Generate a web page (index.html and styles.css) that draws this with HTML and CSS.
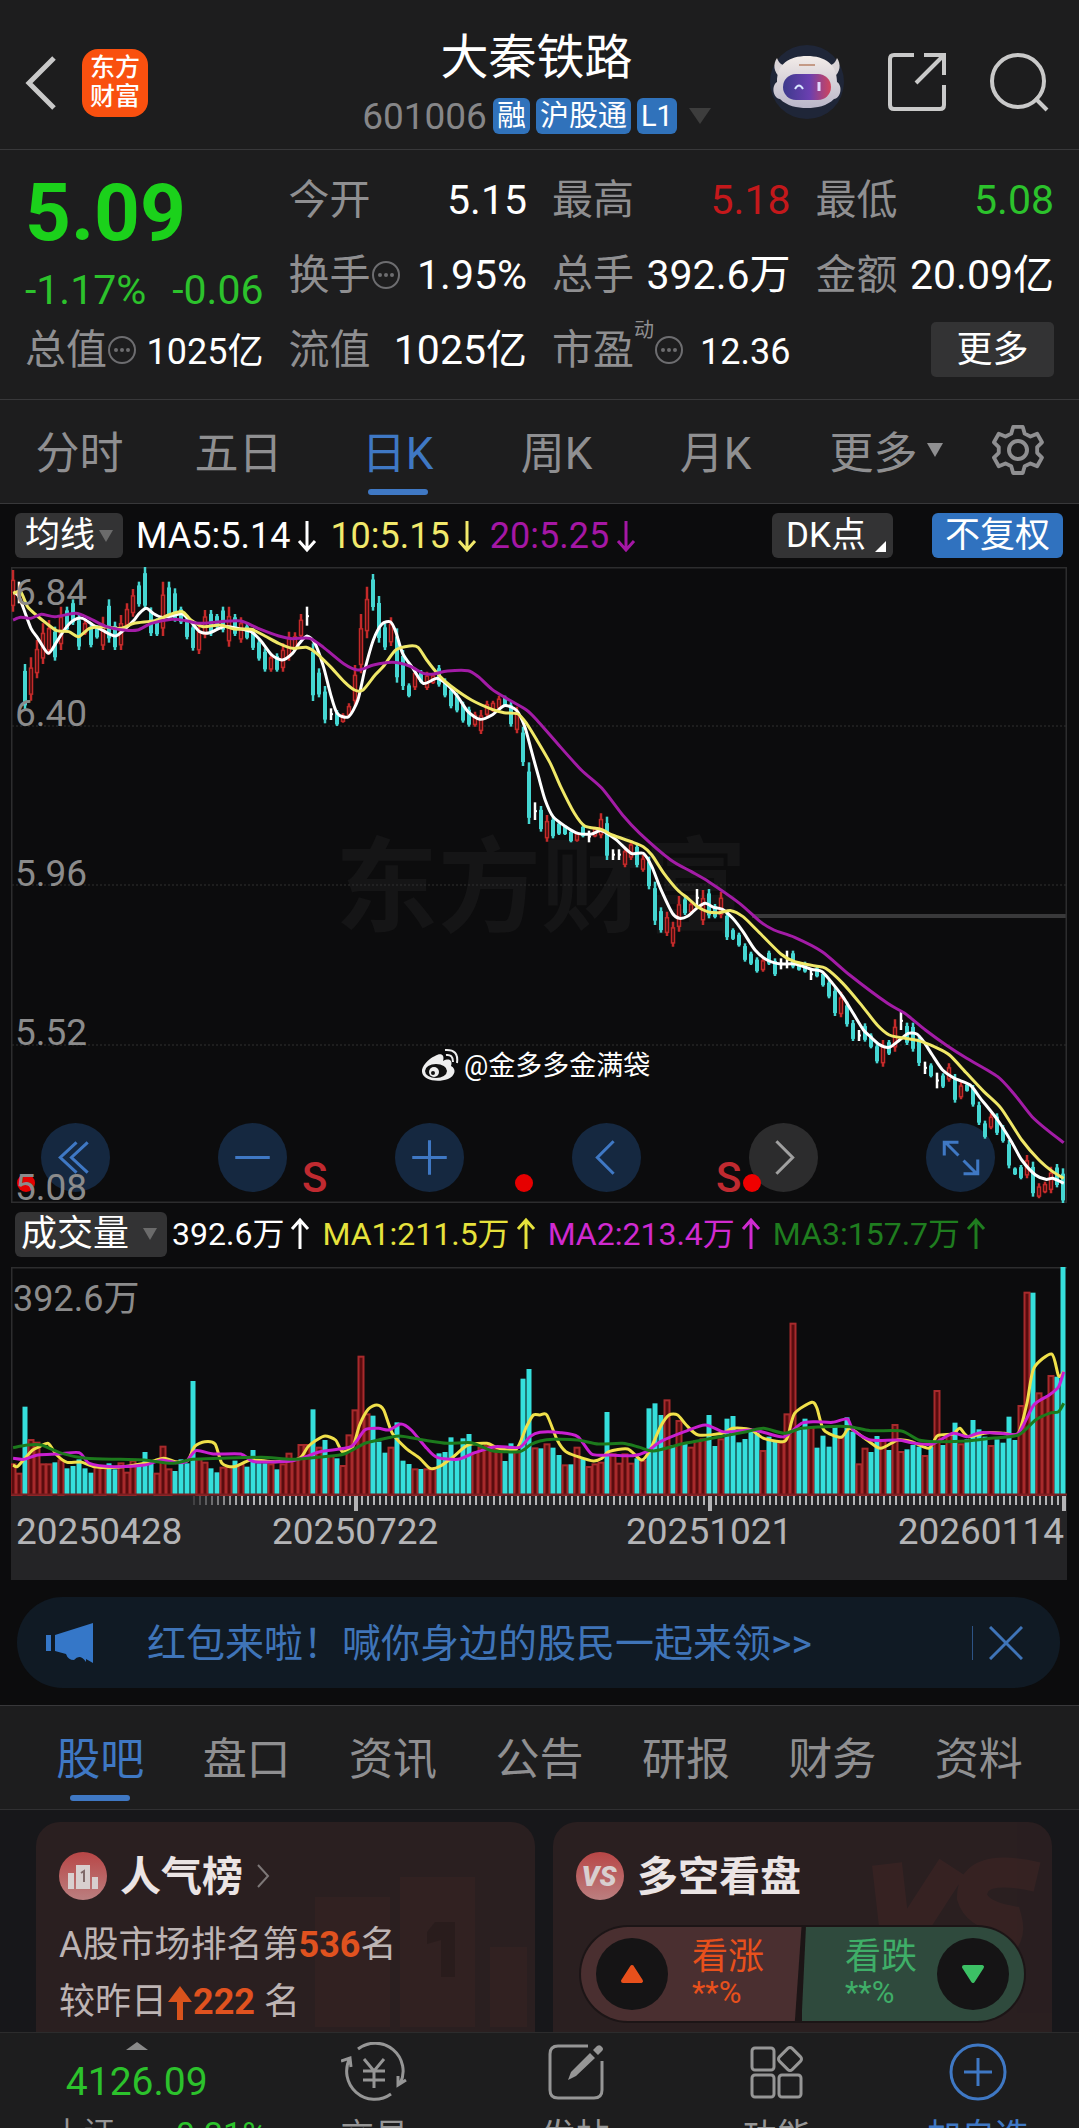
FILE: index.html
```html
<!DOCTYPE html>
<html lang="zh-CN">
<head>
<meta charset="utf-8">
<meta name="viewport" content="width=device-width, initial-scale=1">
<title>大秦铁路 601006</title>
<link rel="stylesheet" href="styles.css">
</head>
<body>
<div class="app">
  <header class="topbar">
    <div class="topbar-left">
      <button class="icon-btn" aria-label="返回">
        <svg width="34" height="56" viewBox="0 0 34 56"><path d="M30 3 L5 28 L30 53" fill="none" stroke="#c9c9c9" stroke-width="5"/></svg>
      </button>
      <a class="logo" href="#"><span>东方</span><span>财富</span></a>
    </div>
    <div class="stock">
      <h1 class="stock-name">大秦铁路</h1>
      <div class="stock-meta">
        <span class="stock-code">601006</span>
        <span class="badge">融</span>
        <span class="badge">沪股通</span>
        <span class="badge">L1</span>
        <svg class="meta-caret" width="22" height="16" viewBox="0 0 22 16"><path d="M0 0H22L11 16Z" fill="#3d3d3d"/></svg>
      </div>
    </div>
    <div class="topbar-right">
      <button class="icon-btn" aria-label="助手">
        <svg width="76" height="76" viewBox="0 0 76 76">
          <defs>
            <linearGradient id="visor" x1="0" x2="1"><stop offset="0" stop-color="#3d3a8c"/><stop offset=".55" stop-color="#6a3fb0"/><stop offset="1" stop-color="#d0455c"/></linearGradient>
            <linearGradient id="shell" x1="0" y1="0" x2="0" y2="1"><stop offset="0" stop-color="#f3ece8"/><stop offset="1" stop-color="#b9b6c9"/></linearGradient>
          </defs>
          <circle cx="38" cy="38" r="37" fill="#1f2638"/>
          <path d="M12 34C4 28 4 20 8 14C10 20 14 22 20 22ZM64 34C72 28 72 20 68 14C66 20 62 22 56 22Z" fill="#d9d3d6"/>
          <path d="M8 38C8 20 20 12 38 12S68 20 68 38C74 42 72 54 65 55C58 62 48 64 38 64S18 62 11 55C4 54 2 42 8 38Z" fill="url(#shell)"/>
          <rect x="14" y="30" width="48" height="26" rx="13" fill="url(#visor)"/>
          <path d="M26 45Q30 38 34 45" fill="none" stroke="#d7e6ff" stroke-width="2"/>
          <path d="M50 38V47" stroke="#e2d8ff" stroke-width="3"/>
          <path d="M30 21H46" stroke="#c49a86" stroke-width="2"/>
        </svg>
      </button>
      <button class="icon-btn" aria-label="分享">
        <svg width="60" height="60" viewBox="0 0 60 60" fill="none" stroke="#c9c9c9" stroke-width="4">
          <path d="M27 3H7Q3 3 3 7V53Q3 57 7 57H53Q57 57 57 53V33"/><path d="M37 3H57V23M56 4L29 31"/>
        </svg>
      </button>
      <button class="icon-btn" aria-label="搜索">
        <svg width="60" height="60" viewBox="0 0 60 60" fill="none" stroke="#c9c9c9" stroke-width="4"><circle cx="29" cy="29" r="26"/><path d="M46 46L58 58"/></svg>
      </button>
    </div>
  </header>

  <section class="quote">
    <div class="price">
      <strong class="price-now">5.09</strong>
      <div class="price-change"><span>-1.17%</span><span>-0.06</span></div>
    </div>
    <div class="cell"><span class="label">今开</span><span>5.15</span></div>
    <div class="cell"><span class="label">最高</span><span class="up">5.18</span></div>
    <div class="cell"><span class="label">最低</span><span class="down">5.08</span></div>
    <div class="cell"><span class="label">换手<svg class="info" viewBox="0 0 30 30"><use href="#info"/></svg></span><span>1.95%</span></div>
    <div class="cell"><span class="label">总手</span><span>392.6万</span></div>
    <div class="cell"><span class="label">金额</span><span>20.09亿</span></div>
    <div class="cell"><span class="label">总值<svg class="info" viewBox="0 0 30 30"><use href="#info"/></svg></span><span class="small">1025亿</span></div>
    <div class="cell"><span class="label">流值</span><span>1025亿</span></div>
    <div class="cell"><span class="label">市盈<sup>动</sup><svg class="info" viewBox="0 0 30 30"><use href="#info"/></svg></span><span class="small">12.36</span></div>
    <div class="cell cell-end"><button class="more-btn">更多</button></div>
    <svg class="defs" aria-hidden="true">
      <symbol id="info" viewBox="0 0 30 30"><circle cx="15" cy="15" r="13" fill="none" stroke="#6d6d70" stroke-width="2"/><circle cx="9" cy="15" r="2" fill="#6d6d70"/><circle cx="15" cy="15" r="2" fill="#6d6d70"/><circle cx="21" cy="15" r="2" fill="#6d6d70"/></symbol>
      <symbol id="arrow" viewBox="0 0 20 34"><path d="M10 2V31M2 22L10 31L18 22" fill="none" stroke="currentColor" stroke-width="3"/></symbol>
    </svg>
  </section>

  <nav class="periods">
    <button class="tab">分时</button>
    <button class="tab">五日</button>
    <button class="tab active">日K</button>
    <button class="tab">周K</button>
    <button class="tab">月K</button>
    <button class="tab">更多<svg class="tab-caret" width="16" height="14" viewBox="0 0 16 14"><path d="M0 0H16L8 14Z" fill="#8f8f91"/></svg></button>
    <button class="tab" aria-label="设置">
      <svg width="52" height="52" viewBox="0 0 52 52" fill="none" stroke="#8f8f91" stroke-width="4" stroke-linejoin="round">
        <path d="M21 2H31L33 9L39 12L46 9L51 18L46 23V29L51 34L46 43L39 40L33 43L31 50H21L19 43L13 40L6 43L1 34L6 29V23L1 18L6 9L13 12L19 9Z" transform="translate(1 1) scale(.96)"/><circle cx="26" cy="26" r="9"/>
      </svg>
    </button>
  </nav>

  <main class="charts">
    <div class="indicator">
      <button class="chip">均线<svg width="14" height="12" viewBox="0 0 14 12"><path d="M0 0H14L7 12Z" fill="#6b6b6b"/></svg></button>
      <span class="ma ma-white">MA5:5.14<svg class="arrow"><use href="#arrow"/></svg></span>
      <span class="ma ma-yellow">10:5.15<svg class="arrow"><use href="#arrow"/></svg></span>
      <span class="ma ma-purple">20:5.25<svg class="arrow"><use href="#arrow"/></svg></span>
      <button class="chip chip-dk">DK点<svg width="11" height="11" viewBox="0 0 11 11"><path d="M11 0V11H0Z" fill="#fff"/></svg></button>
      <button class="chip chip-blue">不复权</button>
    </div>

    <div class="kline">
      <div class="tools">
        <button class="tool" aria-label="最左"><svg viewBox="0 0 68 68"><path d="M35 19L19 34L35 49M46 19L30 34L46 49"/></svg></button>
        <button class="tool" aria-label="缩小"><svg viewBox="0 0 68 68"><path d="M17 34H51"/></svg></button>
        <button class="tool" aria-label="放大"><svg viewBox="0 0 68 68"><path d="M17 34H51M34 17V51"/></svg></button>
        <button class="tool" aria-label="左移"><svg viewBox="0 0 68 68"><path d="M41 18L25 34L41 50"/></svg></button>
        <button class="tool tool-off" aria-label="右移"><svg viewBox="0 0 68 68"><path d="M27 18L43 34L27 50"/></svg></button>
        <button class="tool" aria-label="全屏"><svg viewBox="0 0 68 68"><path d="M32 32L19 19M18 32V19H32M37 37L50 50M51 36V50H37"/></svg></button>
      </div>
      <svg class="plot" id="kline" viewBox="11 567 1056 636" role="img" aria-label="日K线">
        <text class="brand" x="335" y="924">东方财富</text>
        <g class="grid"><path d="M12 726H1066M12 885H1066M12 1045H1066"/></g>
        <path class="last-price" d="M752 916H1066"/>
        <rect class="frame" x="11.5" y="567.5" width="1055" height="635"/>
        <circle cx="26" cy="1183" r="9" fill="#e60000"/>
        <circle cx="524" cy="1183" r="9" fill="#e60000"/>
        <circle cx="752" cy="1183" r="9" fill="#f00000"/>
        <text class="signal" x="302" y="1192">S</text>
        <text class="signal" x="716" y="1192">S</text>
        <g id="candles"></g>
        <g id="averages"></g>
        <g class="axis">
          <text x="15" y="605">6.84</text><text x="15" y="726">6.40</text><text x="15" y="886">5.96</text><text x="15" y="1045">5.52</text><text x="15" y="1200">5.08</text>
        </g>
        <g transform="translate(421 1049)">
          <path d="M14 7C20 3 24 6 22 12C28 9 32 11 30 17C36 20 34 27 27 30C16 34 2 31 1 23C0 18 7 10 14 7Z" fill="#eee"/>
          <ellipse cx="15" cy="22" rx="11" ry="7" fill="#111"/><circle cx="13" cy="23" r="5" fill="#eee"/><circle cx="12" cy="24" r="2" fill="#111"/>
          <path d="M25 6Q32 5 32 13M24 1Q38 0 36 14" fill="none" stroke="#eee" stroke-width="2"/>
        </g>
        <text class="author" x="464" y="1075">@金多多金满袋</text>
      </svg>
    </div>

    <div class="indicator indicator-vol">
      <button class="chip chip-vol">成交量<svg width="14" height="12" viewBox="0 0 14 12"><path d="M0 0H14L7 12Z" fill="#6b6b6b"/></svg></button>
      <span class="ma ma-white">392.6万<svg class="arrow arrow-up"><use href="#arrow"/></svg></span>
      <span class="ma ma-yellow2">MA1:211.5万<svg class="arrow arrow-up"><use href="#arrow"/></svg></span>
      <span class="ma ma-magenta">MA2:213.4万<svg class="arrow arrow-up"><use href="#arrow"/></svg></span>
      <span class="ma ma-green">MA3:157.7万<svg class="arrow arrow-up"><use href="#arrow"/></svg></span>
    </div>

    <div class="volume">
      <svg class="plot" viewBox="11 1267 1056 313" role="img" aria-label="成交量">
        <rect x="11" y="1495" width="1056" height="85" fill="#242426"/>
        <path class="frame" d="M11.5 1495V1267.5H1067"/>
        <text class="vol-max" x="13" y="1311">392.6万</text>
        <g id="bars"></g>
        <g id="vol-averages"></g>
        <g id="ticks"></g>
        <g class="dates"><text x="16" y="1544">20250428</text><text x="272" y="1544">20250722</text><text x="626" y="1544">20251021</text><text x="1064" y="1544" text-anchor="end">20260114</text></g>
      </svg>
    </div>

    <div class="notice">
      <svg width="48" height="40" viewBox="0 0 48 40" fill="#3577c8"><path d="M0 12H5V28H0ZM9 12L47 0V40L40 36V39Q34 30 28 37Q22 37 20 31L9 28Z"/></svg>
      <a class="notice-text" href="#">红包来啦！喊你身边的股民一起来领&gt;&gt;</a>
      <button class="notice-close" aria-label="关闭"><svg width="34" height="34" viewBox="0 0 34 34"><path d="M1 1L33 33M33 1L1 33" stroke="#3f74b8" stroke-width="3"/></svg></button>
    </div>
  </main>

  <nav class="sections">
    <a class="tab active" href="#">股吧</a>
    <a class="tab" href="#">盘口</a>
    <a class="tab" href="#">资讯</a>
    <a class="tab" href="#">公告</a>
    <a class="tab" href="#">研报</a>
    <a class="tab" href="#">财务</a>
    <a class="tab" href="#">资料</a>
  </nav>

  <section class="cards">
    <article class="card">
      <svg class="card-art" width="240" height="205" viewBox="0 0 240 205" fill="#8c3a36"><path d="M20 75H95V205H20ZM105 55H180V205H105ZM195 125H232V205H195Z" opacity=".08"/><path d="M140 100H160V155H146V118L132 122V110Z" fill="#1d1717" opacity=".4"/></svg>
      <h2 class="card-title">
        <svg width="48" height="48" viewBox="0 0 48 48"><defs><linearGradient id="rose" x1="0" y1="0" x2="0" y2="1"><stop offset="0" stop-color="#b84646"/><stop offset="1" stop-color="#bb7f80"/></linearGradient></defs><circle cx="24" cy="24" r="24" fill="url(#rose)"/><path d="M9 21H15V37H9ZM17 13H31V37H17ZM33 25H39V37H33Z" fill="#d8cfcf"/><path d="M22 21L25 19V30" fill="none" stroke="#806a6a" stroke-width="2"/></svg>
        <span>人气榜</span>
        <svg width="14" height="24" viewBox="0 0 14 24"><path d="M2 1L12 12L2 23" fill="none" stroke="#7d7777" stroke-width="2"/></svg>
      </h2>
      <p class="rank">A股市场排名第<b>536</b>名</p>
      <p class="rank">较昨日<svg class="rank-arrow" width="24" height="34" viewBox="0 0 24 34"><path d="M12 0L24 16H15V34H9V16H0Z" fill="#d9531c"/></svg><b>222</b> 名</p>
    </article>
    <article class="card">
      <svg class="card-art" width="240" height="150" viewBox="0 0 240 150" fill="none" stroke="#8c3a36" stroke-width="30" opacity=".12"><path d="M75 42L85 130L140 45M225 55Q160 40 160 75Q165 92 195 98Q205 135 130 130"/></svg>
      <h2 class="card-title">
        <svg width="48" height="48" viewBox="0 0 48 48"><circle cx="24" cy="24" r="24" fill="url(#rose)"/><text class="vs" x="23" y="34" text-anchor="middle">VS</text></svg>
        <span>多空看盘</span>
      </h2>
      <div class="vote">
        <button class="vote-up"><span class="vote-dot"><svg width="24" height="20" viewBox="0 0 24 20"><path d="M12 3L21 17H3Z" fill="#e8501c" stroke="#e8501c" stroke-width="4" stroke-linejoin="round"/></svg></span><span class="vote-text">看涨<small>**%</small></span></button>
        <button class="vote-down"><span class="vote-text">看跌<small>**%</small></span><span class="vote-dot"><svg width="24" height="20" viewBox="0 0 24 20"><path d="M12 17L21 3H3Z" fill="#3cc065" stroke="#3cc065" stroke-width="4" stroke-linejoin="round"/></svg></span></button>
      </div>
    </article>
  </section>

  <nav class="bottom">
    <a class="index" href="#">
      <svg width="22" height="8" viewBox="0 0 22 8"><path d="M11 0L22 8H0Z" fill="#8a8a8a"/></svg>
      <span class="index-value">4126.09</span>
      <span class="index-row"><span>上证</span><span class="down">-0.31%</span></span>
    </a>
    <a class="dock" href="#"><svg width="66" height="60" viewBox="0 0 66 60" fill="none" stroke="#969696" stroke-width="3"><path d="M17 7A28 28 0 0 1 59 42M50 52A28 28 0 0 1 9 16M0 19L9 16L10 25M57 34L57 43L65 38"/><path d="M23 17L33 29L43 17M33 29V46M22 29H44M22 38H44"/></svg>交易</a>
    <a class="dock" href="#"><svg width="60" height="60" viewBox="0 0 60 60" fill="none" stroke="#969696" stroke-width="3"><path d="M42 4H12Q4 4 4 12V48Q4 56 12 56H48Q56 56 56 48V19"/><path d="M22 38L25 30L44 11L49 16L30 34ZM47 8L51 4Q54 2 56 5Q58 7 56 9L52 13Z" fill="#969696" stroke="none"/></svg>发帖</a>
    <a class="dock" href="#"><svg width="60" height="60" viewBox="0 0 60 60" fill="none" stroke="#969696" stroke-width="3"><rect x="5" y="6" width="22" height="22" rx="3"/><rect x="5" y="33" width="22" height="22" rx="3"/><rect x="32" y="33" width="22" height="22" rx="3"/><rect x="34" y="8" width="18" height="18" rx="3" transform="rotate(45 43 17)"/></svg>功能</a>
    <a class="dock dock-blue" href="#"><svg width="60" height="60" viewBox="0 0 60 60" fill="none" stroke="#3f78c4" stroke-width="3"><circle cx="30" cy="30" r="27"/><path d="M16 30H44M30 16V44"/></svg>加自选</a>
  </nav>
</div>
<script src="chart.js"></script>
</body>
</html>
```
FILE: styles.css
```css
* { box-sizing: border-box; }
body {
  margin: 0;
  background: #0c0c0d;
  color: #fff;
  font-family: Roboto, "Noto Sans CJK SC", sans-serif;
}
button {
  margin: 0;
  padding: 0;
  border: 0;
  background: none;
  color: inherit;
  font: inherit;
}
a { color: inherit; text-decoration: none; }
h1, h2, p { margin: 0; font-weight: 400; }
svg { display: block; flex: none; }
.defs { position: absolute; width: 0; height: 0; }
.app { height: 100vh; overflow: hidden; }

/* header */
.topbar {
  display: grid;
  grid-template-columns: 1fr auto 1fr;
  height: 150px;
  padding: 0 30px 0 24px;
  background: #1d1d1e;
  border-bottom: 1px solid #38383a;
}
.topbar-left { display: flex; align-items: center; gap: 24px; padding-top: 16px; }
.topbar-right { display: flex; align-items: center; justify-content: flex-end; gap: 42px; padding-top: 14px; }
.logo {
  display: flex;
  flex-direction: column;
  align-items: center;
  justify-content: center;
  width: 66px;
  height: 68px;
  padding-bottom: 2px;
  border-radius: 16px;
  background: #f9500f;
  color: #fff;
  font-size: 25px;
  font-weight: 500;
  line-height: 29px;
}
.stock { display: flex; flex-direction: column; align-items: center; padding-top: 28px; }
.stock-name { font-size: 48px; line-height: 60px; }
.stock-meta { display: flex; align-items: center; gap: 6px; height: 56px; }
.stock-code { font-size: 37px; color: #868688; }
.badge {
  padding: 0 4px;
  border-radius: 6px;
  background: #3072bb;
  font-size: 29px;
  line-height: 36px;
}
.meta-caret { margin-left: 6px; }

/* quote */
.quote {
  display: grid;
  grid-template-columns: repeat(4, 1fr);
  grid-auto-rows: 75px;
  column-gap: 25px;
  height: 250px;
  padding: 12px 25px 0;
  background: #1d1d1e;
  border-bottom: 1px solid #38383a;
  font-size: 41px;
}
.price { grid-row: span 2; color: #1bd11b; }
.price-now { display: block; font-size: 80px; font-weight: 700; line-height: 102px; }
.price-change { display: flex; justify-content: space-between; line-height: 52px; color: #2cc22c; }
.cell { display: flex; align-items: baseline; justify-content: space-between; white-space: nowrap; line-height: 76px; }
.cell-end { align-items: center; justify-content: flex-end; }
.label { display: flex; align-items: center; color: #8f8f91; }
.label sup { align-self: flex-start; margin-top: 8px; font-size: 20px; line-height: 20px; }
.info { width: 30px; height: 30px; }
.small { font-size: 36px; }
.up { color: #c4181b; }
.down { color: #2cc22c; }
.more-btn { width: 123px; height: 55px; border-radius: 5px; background: #333334; font-size: 36px; line-height: 50px; }

/* tabs */
.tab {
  position: relative;
  display: flex;
  align-items: center;
  justify-content: center;
  padding-bottom: 3px;
  color: #8f8f91;
  font-size: 44px;
}
.tab.active { color: #3f78c4; }
.tab.active::after {
  content: "";
  position: absolute;
  bottom: 8px;
  left: 50%;
  width: 60px;
  height: 6px;
  margin-left: -30px;
  border-radius: 3px;
  background: #3f78c4;
}
.tab-caret { margin-left: 9px; }
.periods {
  display: grid;
  grid-template-columns: repeat(5, 159fr) 182fr 82fr;
  height: 104px;
  padding-right: 20px;
  background: #1d1d1e;
  border-bottom: 1px solid #38383a;
}
.sections {
  display: grid;
  grid-template-columns: repeat(7, 1fr);
  height: 105px;
  padding: 0 27px;
  background: #1d1d1e;
  border-top: 1px solid #38383a;
  border-bottom: 1px solid #303032;
}

/* charts */
.charts { padding: 0 12px 17px 11px; }
.indicator { display: flex; align-items: center; height: 63px; padding: 0 4px; gap: 13px; font-size: 36px; white-space: nowrap; }
.chip {
  display: flex;
  align-items: center;
  gap: 4px;
  height: 45px;
  padding: 0 10px;
  border-radius: 6px;
  background: #333334;
  font-size: 35px;
  line-height: 40px;
}
.chip-dk { gap: 9px; margin-left: auto; padding: 0 7px 0 14px; }
.chip-dk svg { align-self: flex-end; margin-bottom: 6px; }
.chip-blue { margin-left: 26px; padding: 0 13px; background: #3072bf; }
.chip-vol { gap: 14px; padding: 0 10px 0 6px; font-size: 36px; }
.ma { display: flex; align-items: center; gap: 7px; }
.arrow { width: 20px; height: 34px; }
.arrow-up { transform: rotate(180deg); }
.ma-white { color: #fff; }
.ma-yellow { color: #f2e96b; }
.ma-purple { color: #a517a5; }
.ma-yellow2 { color: #e6e23c; }
.ma-magenta { color: #d02ad0; }
.ma-green { color: #1f7d1f; }
.indicator-vol { height: 64px; font-size: 32px; gap: 12px; line-height: 40px; padding-bottom: 2px; }
.indicator-vol .ma { gap: 6px; }
.chip-vol + .ma { margin-left: -7px; }
.kline { position: relative; }
.plot { position: relative; width: 100%; height: auto; pointer-events: none; }
.frame { fill: none; stroke: #2d2d2e; stroke-width: 2; }
.grid { stroke: #303030; stroke-dasharray: 2 2; }
.last-price { stroke: #39393a; stroke-width: 4; }
.axis text, .dates text { font-size: 37px; fill: #8b8b8b; }
.dates text { fill: #b4b4b6; }
.vol-max { font-size: 36px; fill: #8b8b8b; }
.brand { font-size: 103px; font-weight: 700; fill: #151516; }
.signal { font-size: 42px; font-weight: 500; fill: #c02a30; }
.author { font-size: 27px; fill: #fff; }
.tools {
  position: absolute;
  left: 30px;
  right: 72px;
  bottom: 11px;
  display: flex;
  justify-content: space-between;
}
.tool { width: 69px; height: 69px; border-radius: 50%; background: #152840; }
.tool svg { fill: none; stroke: #3f78c4; stroke-width: 3; }
.tool-off { background: #2c2c2d; }
.tool-off svg { stroke: #a0a0a0; }

.notice {
  display: flex;
  align-items: center;
  height: 91px;
  margin: 17px 7px 0 6px;
  padding: 0 37px 0 29px;
  border-radius: 46px;
  background: #101a24;
  color: #3f74b8;
  font-size: 39px;
}
.notice-text { flex: 1; margin-left: 53px; padding-bottom: 6px; }
.notice-close { padding-left: 16px; border-left: 1px solid #2d5385; }

/* cards */
.cards {
  display: grid;
  grid-template-columns: 1fr 1fr;
  gap: 18px;
  height: 222px;
  padding: 12px 27px 0 36px;
  background: #17171a;
}
.card {
  position: relative;
  padding: 24px 23px 0;
  border-radius: 24px 24px 0 0;
  background: #2a1f20;
  overflow: hidden;
}
.card-art { position: absolute; right: 0; top: 0; }
.card-title { position: relative; display: flex; align-items: center; gap: 13px; height: 60px; font-size: 41px; font-weight: 700; color: #ebe4e4; }
.card-title span { padding-bottom: 6px; }
.rank { position: relative; display: flex; align-items: center; height: 57px; font-size: 36px; line-height: 57px; color: #bdb4b4; white-space: pre; }
.card-title + .rank { margin-top: 11px; }
.rank b { color: #e0521f; }
.rank-arrow { margin: 0 1px; }
.vs { font-size: 28px; font-weight: 900; font-style: italic; fill: #d8cfcf; }
.vote { position: relative; display: grid; grid-template-columns: 222fr 224fr; height: 98px; margin: 19px 3px 0; padding: 2px; border-radius: 49px; background: #1c1516; overflow: hidden; }
.vote-up, .vote-down { display: flex; align-items: center; padding: 0 15px; text-align: left; }
.vote-up { gap: 24px; border-radius: 47px 0 0 47px; background: #4a2f30; color: #e8501c; clip-path: polygon(0 0, 100% 0, 97% 100%, 0 100%); }
.vote-down { gap: 20px; justify-content: flex-end; border-radius: 0 47px 47px 0; background: #2f4a3d; color: #3fae68; clip-path: polygon(2% 0, 100% 0, 100% 100%, 0 100%); }
.vote-dot { display: flex; align-items: center; justify-content: center; width: 72px; height: 72px; border-radius: 50%; background: #151415; }
.vote-text { display: block; padding-bottom: 3px; font-size: 36px; line-height: 40px; }
.vote-text small { display: block; font-size: 31px; line-height: 32px; }

/* bottom bar */
.bottom {
  display: grid;
  grid-template-columns: 273fr repeat(4, 201fr);
  height: 150px;
  background: #1d1d1e;
  border-top: 1px solid #2c2c2d;
  color: #969696;
}
.index { display: flex; flex-direction: column; align-items: center; padding-top: 9px; }
.index-value { font-size: 39px; line-height: 64px; color: #2cc22c; }
.index-row { display: flex; gap: 52px; padding-left: 46px; font-size: 31px; line-height: 40px; }
.index-row .down { font-size: 34px; }
.dock { display: flex; flex-direction: column; align-items: center; gap: 10px; padding-top: 9px; font-size: 34px; line-height: 48px; }
.dock-blue { color: #3f78c4; }
```
FILE: chart.js
```js
const NS = "http://www.w3.org/2000/svg";
const STEP = 6;
const FIRST_X = 13;
const COLORS = { r: "#c42a2a", c: "#45d6d2", w: "#ffffff" };

function draw(parent, tag, attrs) {
  const node = document.createElementNS(NS, tag);
  for (const key in attrs) node.setAttribute(key, attrs[key]);
  document.getElementById(parent).appendChild(node);
}

// One entry per day: r rise, c fall, w flat; then high and low in thirds of a unit under the origin.
const candles = [
  [560, "r30-155 w65-130 c312-450 r292-422 r240-355 r190-312 r180-285 c200-302 r140-270 c140-215 c118-195 c165-270 r180-225 c190-262 c195-236 r170-270 c118-248 c185-270 r165-270 r130-205 r87-170 c65-140 c20-150 c142-228 c175-228 r65-228 c65-180 c85-185 c140-192 c165-238 c190-272 r195-282 r150-235 c150-228 c162-205 c140-217 r140-260 c162-228 r172-248 c192-238 c205-270 c238-302 c265-335 r280-335 c280-335 r250-335 r215-302 r217-272 r162-238 w140-197 c250-423 c325-412 c378-490 w445-480 c450-498 r460-488 r430-470 r315-440 r162-340 r80-235 c42-152 c108-248 c190-270 r172-258 c205-368 c270-390 c370-412 r325-390 c330-370 r335-390 r340-372 c315-380 c355-412 c380-445 c400-457 c425-488 c440-500 r455-500 r450-522 r422-470 r422-455 r407-450 c407-440 c425-500 r440-520 c500-618 c607-792 w727-780 c738-815 r765-845 c770-835 c785-825 c795-825 c810-847 r815-845 c795-832 w812-847 r800-832 r760-835 c770-900 w868-900 w868-900 r860-922 r840-900 c850-922 r885-935 c890-988"],
  [850, "c95-225 c172-248 r185-258 r215-290 r138-245 c140-195 r155-190 w117-170 r120-225 c117-205 c162-205 r125-205 c185-270 c235-270 c248-290 c280-335 c305-345 c322-368 r322-365 c302-345 c325-378 w325-358 w302-355 c302-355 c335-362 c335-368 w355-390 c350-382 c365-410 c390-445 c410-498 r425-502 c455-530 c510-573 w540-573 c520-575 c550-595 c580-640 r570-650 c570-615 r508-605 w485-540 c518-585 c518-605 c555-648 w635-672 c640-682 w668-715 c670-714 r640-695 c672-758 r695-748 c700-725 c705-770 c755-825 c812-866 r790-838 c790-855 c825-878 c870-955 c952-975 c945-988 r915-985 c935-1040 r1000-1045 r995-1030 r950-1030 c942-1012 c955-1062"]
];

let x = FIRST_X;
for (const [origin, list] of candles) {
  for (const item of list.split(" ")) {
    const kind = item[0];
    const [high, low] = item.slice(1).split("-").map(v => origin + v / 3);
    const size = low - high;
    const color = COLORS[kind];
    if (kind === "r") {
      draw("candles", "path", { d: `M${x} ${high}V${high + size * 0.25}M${x} ${low - size * 0.15}V${low}`, stroke: color, "stroke-width": 2.5 });
      draw("candles", "rect", { x: x - 1.5, y: high + size * 0.25, width: 3, height: size * 0.6, fill: "#3a0c0c", stroke: color, "stroke-width": 1.5 });
    } else {
      draw("candles", "path", { d: `M${x} ${high}V${low}`, stroke: color, "stroke-width": 2.5 });
      if (kind === "c") draw("candles", "rect", { x: x - 2, y: high + size * 0.15, width: 4, height: size * 0.75, fill: color });
      else draw("candles", "path", { d: `M${x - 1} ${(high + low) / 2}H${x + 2}`, stroke: color, "stroke-width": 2 });
    }
    x += STEP;
  }
}

// Average lines are stored as runs of x,y pairs, each run with its own origin.
function smooth(parent, color, runs) {
  const points = [];
  for (const [ox, oy, list] of runs) {
    for (const pair of list.split(" ")) {
      const [px, py] = pair.split(",").map(Number);
      points.push([ox + px / 2.906, oy + py / 3]);
    }
  }
  let d = `M${points[0]}`;
  for (let i = 1; i < points.length; i++) {
    const a = points[Math.max(i - 2, 0)], b = points[i - 1], c = points[i], e = points[Math.min(i + 1, points.length - 1)];
    d += `C${b[0] + (c[0] - a[0]) / 8} ${b[1] + (c[1] - a[1]) / 8} ${c[0] - (e[0] - b[0]) / 8} ${c[1] - (e[1] - b[1]) / 8} ${c[0]} ${c[1]}`;
  }
  draw(parent, "path", { d, fill: "none", stroke: color, "stroke-width": 3, "stroke-linejoin": "round" });
}

smooth("averages", "#ffffff", [
  [0, 560, "40,95 55,110 70,150 90,205 110,235 140,280 165,245 190,205 215,180 240,175 270,195 300,212 335,228 365,205 390,180 405,160 425,145 445,160 470,172 500,168 530,162 555,185 580,215 610,218 650,200 690,205 730,215 760,245 790,285 820,300 850,280 870,250 892,228 915,250 940,320 960,400 980,460 1013,470 1040,420 1060,330 1085,240 1110,192 1135,186 1150,215 1170,280 1200,325 1230,370 1270,355 1300,375 1330,410 1360,455 1395,478 1430,465 1465,437 1500,450 1525,500 1545,575 1565,650"],
  [540, 560, "15,720 38,770 75,800 110,820 150,822 178,812 220,838 265,880 300,880 325,920 350,985 385,1060"],
  [540, 850, "405,205 430,198 455,175 480,160 505,172 530,178 560,205 590,245 625,300 660,330 700,342 740,342 790,358 820,365 850,400 880,440 910,490 940,540 960,560 985,583 1015,592 1045,570 1070,550 1095,552 1115,575 1140,615 1170,660 1205,685 1250,705 1280,745 1330,810 1370,875 1400,930 1440,975 1470,988 1490,985 1522,1000"]
]);
smooth("averages", "#f0e868", [
  [0, 560, "38,100 60,95 80,140 105,165 135,190 165,212 200,215 228,230 260,205 300,200 350,205 390,190 450,182 490,165 530,155 555,180 590,200 640,195 680,207 730,208 770,228 810,250 850,265 890,262 920,280 960,320 1000,365 1030,390 1055,390 1090,345 1115,318 1150,270 1190,258 1215,262 1240,300 1275,345 1310,378 1370,420 1430,448 1465,458 1505,462 1530,490 1560,540"],
  [540, 560, "30,610 60,680 100,760 130,798 178,808 210,825 265,845 300,860 325,885 360,940 400,990"],
  [540, 850, "430,145 460,172 490,186 520,188 555,182 590,200 630,240 700,312 740,335 800,348 830,355 880,400 930,460 980,525 1015,555 1050,563 1100,572 1150,592 1190,615 1240,670 1290,725 1340,775 1400,870 1450,930 1490,965 1522,985"]
]);
smooth("averages", "#a31ca6", [
  [0, 560, "38,180 60,172 90,175 120,163 160,170 220,160 260,175 310,200 360,210 400,210 440,190 500,178 540,182 580,190 640,185 700,183 750,205 810,228 850,236 900,235 940,262 1000,312 1040,330 1085,315 1140,307 1190,318 1230,340 1260,342 1300,333 1360,332 1390,350 1430,388 1480,420 1530,450 1560,480"],
  [540, 560, "50,550 120,630 180,685 240,765 290,820 380,900 440,935"],
  [540, 850, "490,95 580,160 640,215 680,240 740,262 820,305 900,375 1010,460 1060,490 1120,540 1180,585 1240,625 1330,680 1380,735 1430,800 1480,845 1522,878"]
]);

// Volume: direction and top edge, in thirds of a unit under y = 1250.
const volumes = "r640 r668 c470 r567 r575 r640 r640 c637 r628 c655 c648 c628 c655 c668 r645 r645 c640 c658 r637 r665 r630 c640 c606 c640 r668 r587 r655 c663 c628 c640 c393 r625 r635 c655 c667 r650 r648 c632 r640 c650 c600 c640 c640 r640 c658 r640 r608 r625 r582 r582 c478 r590 c570 r615 c625 r645 r553 r478 r317 r490 c497 c575 c608 r590 c517 c632 c642 r655 c657 r655 r655 c610 c606 c562 c625 c565 c552 r605 r590 r585 r595 r592 c633 c580 r600 c386 c357 r592 c595 r580 c593 c615 r643 c643 r590 c625 r648 r640 r635 c486 r610 r638 r610 r638 c625 r630 c475 c460 c495 r448 c585 r510 c580 r590 r570 r565 c495 c588 r565 c506 c498 c577 c567 c540 c548 r600 c560 c575 r575 r490 r218 c540 c506 r530 c593 c557 c590 c530 r560 c502 c545 r640 r593 c606 c558 r570 c600 r522 r603 c598 c585 c590 r615 c590 r420 c585 r550 c518 r580 c568 c510 c538 c560 r585 c568 c578 c500 c570 r465 r125 c128 r427 r440 r375 c380 c50";
volumes.split(" ").forEach((item, i) => {
  const top = 1250 + item.slice(1) / 3;
  const left = FIRST_X + i * STEP;
  if (item[0] === "r") draw("bars", "rect", { x: left - 2.5, y: top + 1, width: 5, height: 1494 - top, fill: "#5a0c0e", stroke: "#a82a2c", "stroke-width": 2 });
  else draw("bars", "rect", { x: left - 2.5, y: top, width: 5, height: 1494 - top, fill: "#35dfdc" });
});
draw("bars", "path", { d: "M11 1494.5H1067", stroke: "#7a1f21", "stroke-width": 2 });

smooth("vol-averages", "#f0e04a", [
  [0, 1250, "38,645 50,650 70,628 95,600 115,590 140,580 165,615 195,637 235,636 275,650 340,652 420,640 475,625 510,635 545,632 565,590 595,575 625,582 645,640 680,650 730,630 800,635 870,625 895,590 920,570 945,558 975,570 995,605 1025,590 1045,525 1070,478 1095,465 1115,480 1140,550 1180,595 1220,625 1250,655 1280,648 1320,618 1360,585 1415,580 1450,595 1500,598 1530,530 1550,495"],
  [540, 1250, "0,495 20,495 50,570 75,605 110,620 155,633 180,625 200,605 255,597 295,630 320,600 350,530 375,495 400,495 425,525 460,555 530,550 560,535 610,538 650,565 705,575 720,560 740,490 790,457 805,475 825,540 875,562 900,535 950,570 990,595 1040,570 1080,575 1130,595 1155,557 1200,552 1220,535 1245,560 1300,548 1350,550 1390,550 1415,460 1435,355 1487,312 1507,378 1522,365"]
]);
smooth("vol-averages", "#c91fd0", [
  [0, 1250, "38,625 70,628 110,615 170,612 230,608 260,640 330,650 420,645 470,630 510,638 540,635 570,602 620,612 700,612 740,635 850,632 930,605 1020,590 1060,540 1100,535 1130,540 1165,522 1195,540 1240,595 1270,622 1330,628 1380,608 1440,590 1510,592 1540,560"],
  [540, 1250, "0,547 60,548 110,560 150,612 200,615 270,617 310,605 350,575 420,545 480,525 530,545 560,545 620,540 660,550 710,560 760,520 800,515 850,517 893,507 910,540 960,570 1040,570 1090,580 1140,582 1200,550 1240,560 1280,548 1340,550 1390,550 1435,465 1480,435 1507,410 1522,365"]
]);
smooth("vol-averages", "#1c7a1c", [
  [0, 1250, "38,593 80,585 120,585 180,610 250,625 350,628 420,630 500,640 560,628 640,625 760,622 850,628 940,620 1000,612 1060,580 1100,570 1160,558 1230,570 1300,580 1370,578 1430,602 1510,605 1540,585"],
  [540, 1250, "0,573 40,568 110,570 170,582 240,580 290,592 330,603 420,580 500,565 600,545 650,535 710,550 760,535 830,530 900,530 960,542 1050,543 1100,570 1150,575 1240,573 1310,565 1390,555 1440,510 1480,490 1507,485 1522,460"]
]);

for (let i = 30; i < 176; i++) {
  const tall = [57, 116, 175].includes(i);
  const tx = FIRST_X + i * STEP + 1;
  draw("ticks", "path", { d: `M${tx} 1496V${tall ? 1511 : 1505}`, stroke: "#b4b4b6", "stroke-width": tall ? 4 : 2, opacity: Math.min(1, (i - 28) / 10) });
}
```
